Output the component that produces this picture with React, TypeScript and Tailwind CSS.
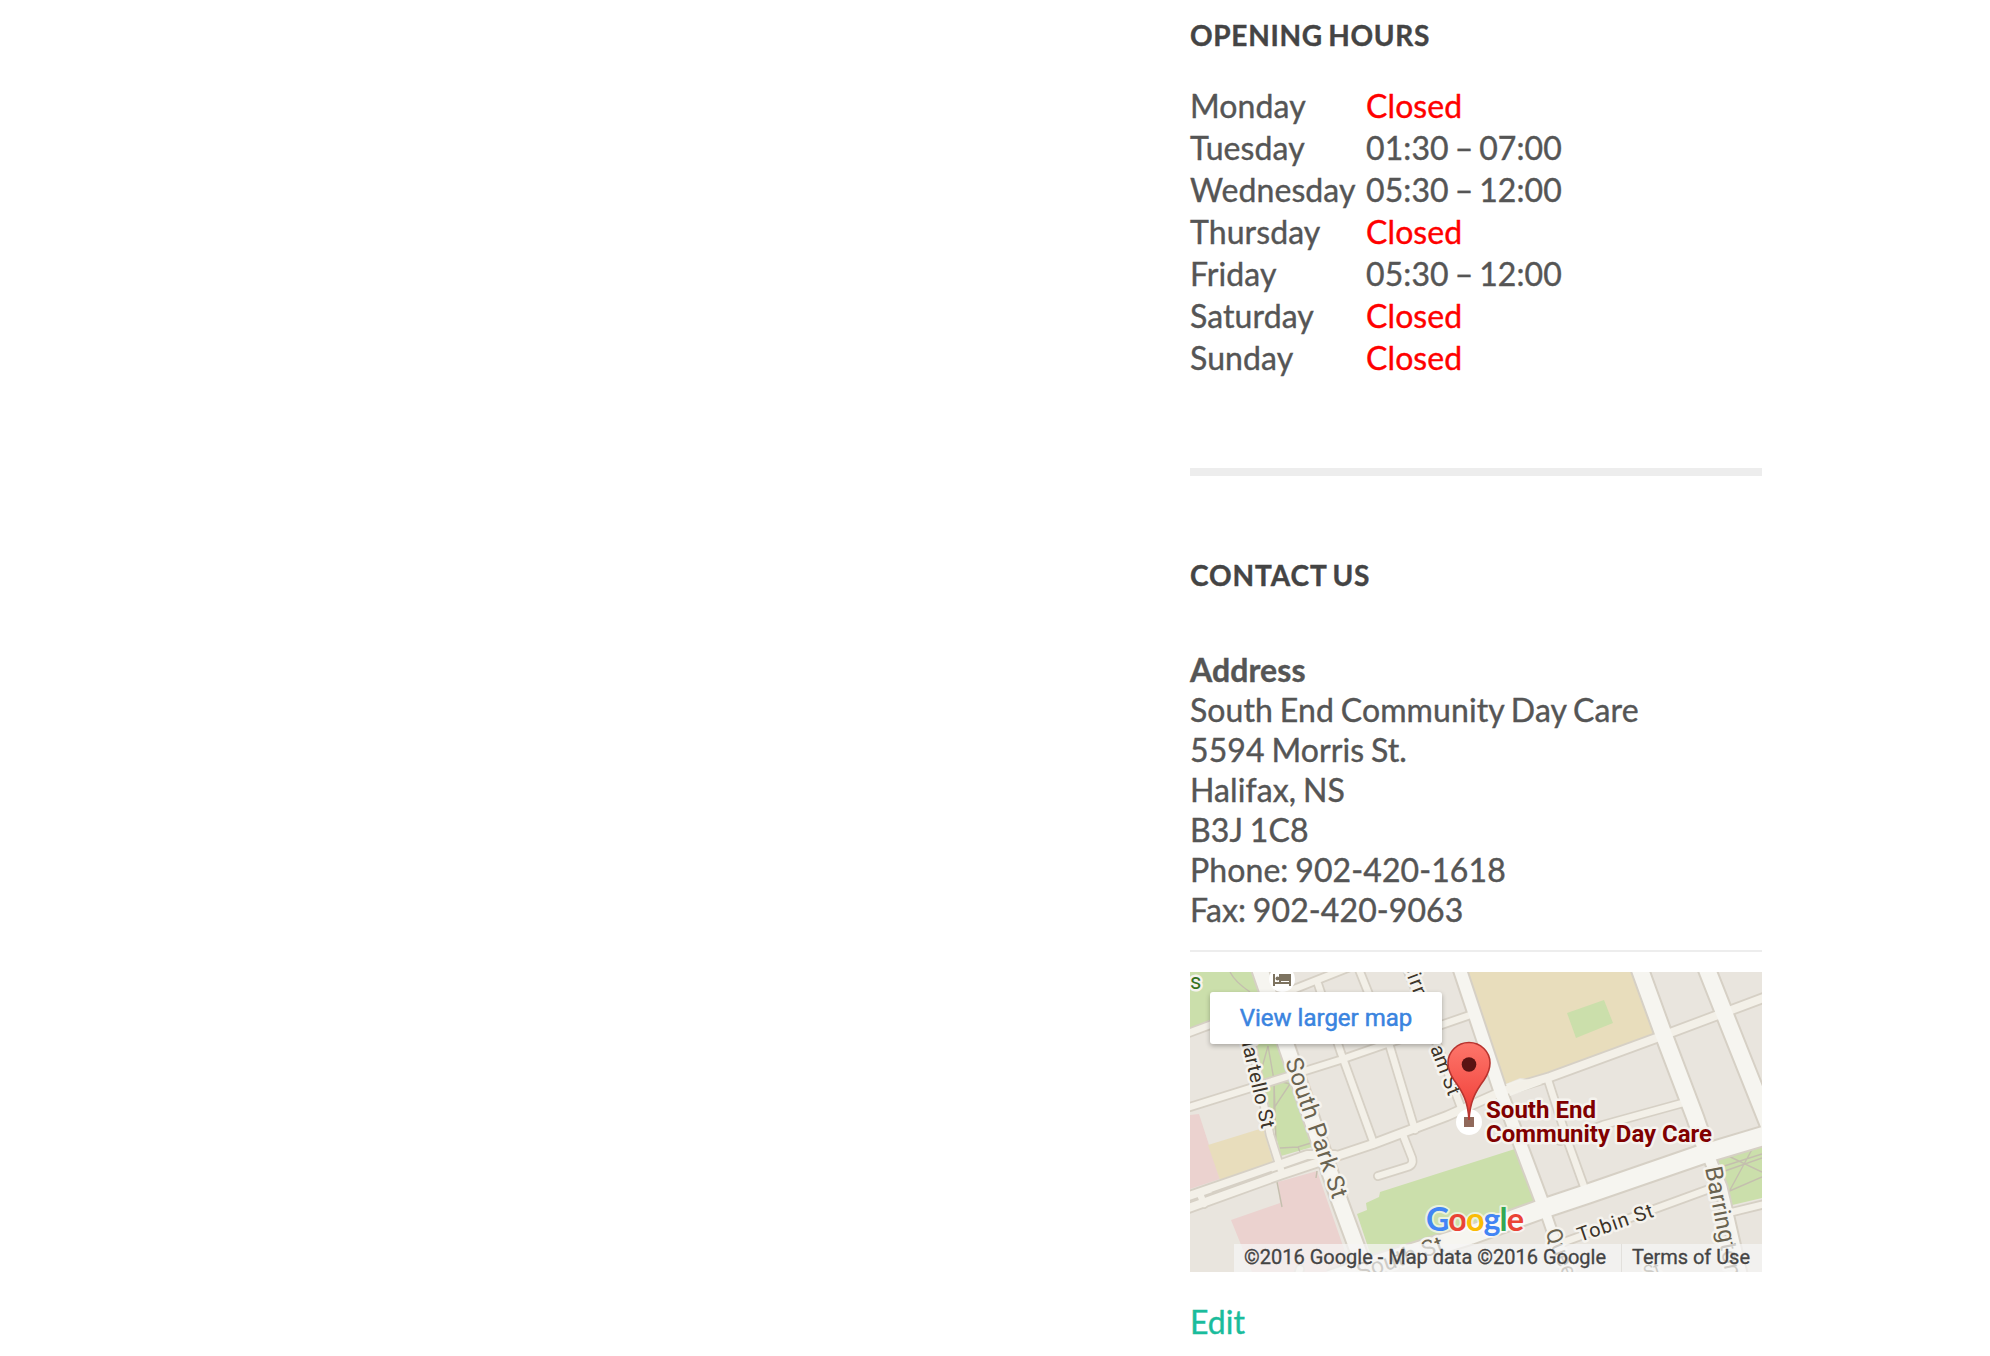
const hours: [string, string][] = [
  ['Monday', 'Closed'],
  ['Tuesday', '01:30 – 07:00'],
  ['Wednesday', '05:30 – 12:00'],
  ['Thursday', 'Closed'],
  ['Friday', '05:30 – 12:00'],
  ['Saturday', 'Closed'],
  ['Sunday', 'Closed'],
];

const address = [
  'South End Community Day Care',
  '5594 Morris St.',
  'Halifax, NS',
  'B3J 1C8',
  'Phone: 902-420-1618',
  'Fax: 902-420-9063',
];

const minorRoads = [
  'M0 135 L150 88 L283 42',
  'M-4 62 L20 53 L107 16 L160 -5',
  'M128 12 L151 81 L184 172',
  'M168 -5 L200 75 L225 158',
  'M217 -3 L250 80 L272 138',
  'M62 73 L80 163 L91 198',
  'M358 108 L378 170 L396 220',
  'M370 169 L413 153 L500 129',
  'M522 216 L440 246 L366 273',
  'M213 163 L222 186 Q224 193 217 195 L188 204',
  'M575 232 L530 243',
  'M10 222 L14 232',
  'M106 310 L110 297',
];

const midRoads = ['M-4 225 L60 203 L117 183 L145 183', 'M-4 237 L90 203 L183 172 L257 144 L313 119 L360 105 L480 61 L576 25'];

const majorRoads: [string, number][] = [
  ['M69 -5 L110 113 L150 230 L178 306', 15],
  ['M269 -5 L310 118 L352 230', 12],
  ['M352 230 L378 306', 9],
  ['M449 -5 L473 61 L505 145 L517 180', 16],
  ['M517 180 L531 215 L552 306', 11],
  ['M516 -5 L535 43 L580 156', 16],
  ['M140 308 L190 291 L280 263 L352 237 L397 222 L513 182 L580 162', 18],
];

function MapDrawing() {
  return (
    <svg width="572" height="300" viewBox="0 0 572 300" className="block" fontFamily="Roboto, sans-serif">
      <rect width="572" height="300" fill="#e9e5de" />
      <g fill="#cbdfab">
        <path d="M0 0 H62 L100 90 L129 173 L91 184 L60 60 L20 48 L0 57Z" />
        <path d="M328 176 L190 220 L189 225 L176 231 L177 238 L167 242 L184 293 L280 263 L352 237Z" />
        <path d="M525 181 L572 168 V226 L538 234Z" />
      </g>
      <g fill="#ebd2cf">
        <path d="M0 143 L9 142 L30 207 L0 217Z" />
        <path d="M88 210 L127 199 L162 300 H62 L41 248 L90 231Z" />
      </g>
      <g fill="#e8ddbc">
        <path d="M18 173 L73 156 L83 190 L30 208Z" />
        <path d="M276 0 H443 L464 62 L345 107 L330 106 L316 112Z" />
      </g>
      <path d="M377 41 L414 28 L423 51 L386 66Z" fill="#cbdfab" />
      <g fill="none" stroke="#c4bfae" strokeWidth="1.4">
        <path d="M40 0 Q45 10 60 20 M68 110 L78 74 L84 108 L100 112 L84 136 L84 108 L68 110 M84 108 L86 170 M90 176 L108 175 L121 171 M108 175 L110 180" />
        <path d="M530 180 L572 200 M528 196 L572 182 M566 170 L540 218 M535 221 L572 205 M532 200 L572 186" />
        <path d="M87 210 L92 235 M127 199 L126 206" />
      </g>
      <g fill="none" stroke="#d6d0c5" strokeLinecap="round" strokeLinejoin="round">
        {minorRoads.map((d) => <path key={d} d={d} strokeWidth="10" />)}
        {midRoads.map((d) => <path key={d} d={d} strokeWidth="11.5" />)}
        {majorRoads.map(([d, w]) => <path key={d} d={d} strokeWidth={w + 4} strokeLinecap="butt" />)}
      </g>
      <path d="M316 112 L330 107 L345 108 L352 112 L320 124Z" fill="#f3f1ea" />
      <g fill="none" stroke="#f3f0e8" strokeLinecap="round" strokeLinejoin="round">
        {minorRoads.map((d) => <path key={d} d={d} strokeWidth="6.5" />)}
        {midRoads.map((d) => <path key={d} d={d} strokeWidth="8" />)}
        {majorRoads.map(([d, w]) => <path key={d} d={d} strokeWidth={w} stroke="#f6f5f0" />)}
      </g>
      <path d="M22 221 L82 200" stroke="#d6d0c5" strokeWidth="2.5" fill="none" />

      <g stroke="#f5f3ee" strokeWidth="5" strokeLinejoin="round" paintOrder="stroke" fontSize="20">
        <text x="0" y="17" fill="#35721f" fontSize="22">s</text>
        <g fill="#3c3429">
          <text transform="translate(49 59) rotate(77)" textLength="101">Martello St</text>
          <text transform="translate(212 -9) rotate(69)" textLength="52">Birmi</text>
          <text transform="translate(240 76) rotate(69)" textLength="52">am St</text>
          <text transform="translate(390 270) rotate(-19)" textLength="79">Tobin St</text>
        </g>
        <g fill="#6a6350" fontSize="24">
          <text transform="translate(95 89) rotate(71)" textLength="147">South Park St</text>
          <text transform="translate(170 308) rotate(-19)" textLength="90" fontSize="23">South St</text>
          <text transform="translate(515 196) rotate(79)" textLength="112">Barrington</text>
          <text transform="translate(355 260) rotate(68)" fontSize="22">Queen</text>
          <text transform="translate(456 307) rotate(-19)" fontSize="18">St</text>
        </g>
      </g>

      <circle cx="92" cy="7" r="13" fill="#fff" />
      <path d="M84 2 V14 M84 11 H100 M100 14 V3 H90 V10" stroke="#7d7360" strokeWidth="2" fill="none" />
      <rect x="91" y="4" width="9" height="5" fill="#7d7360" />
      <circle cx="87.500" cy="6.500" r="2" fill="#7d7360" />

      <circle cx="279" cy="150" r="13" fill="#fff" />
      <rect x="274" y="145" width="10" height="10" fill="#90695b" />
      <linearGradient id="pin" x1="0" y1="0" x2="0" y2="1">
        <stop offset="0" stopColor="#fd766b" />
        <stop offset="0.6" stopColor="#f5524a" />
        <stop offset="1" stopColor="#e9352f" />
      </linearGradient>
      <path
        d="M279 148 C278 130 273 120 264 108 C260 102 258 97 258 91 A21 20.5 0 0 1 300 91 C300 97 298 102 294 108 C285 120 280 130 279 148Z"
        fill="url(#pin)"
        stroke="#b8342f"
        strokeWidth="1.6"
      />
      <circle cx="279" cy="92.5" r="7.3" fill="#5a1313" />

      <g fill="#800000" stroke="#f5f3ee" strokeWidth="5" strokeLinejoin="round" paintOrder="stroke" fontSize="24" fontWeight="700">
        <text x="296" y="146" textLength="110" lengthAdjust="spacingAndGlyphs">South End</text>
        <text x="296" y="170" textLength="226" lengthAdjust="spacingAndGlyphs">Community Day Care</text>
      </g>

      <text
        x="236"
        y="258.500"
        fontFamily="Lato, sans-serif"
        fontSize="32.500"
        fontWeight="700"
        textLength="98"
        stroke="#fff"
        strokeOpacity="0.6"
        strokeWidth="4"
        strokeLinejoin="round"
        paintOrder="stroke"
      >
        <tspan fill="#4285f4">G</tspan>
        <tspan fill="#ea4335">o</tspan>
        <tspan fill="#fbbc05">o</tspan>
        <tspan fill="#4285f4">g</tspan>
        <tspan fill="#34a853">l</tspan>
        <tspan fill="#ea4335">e</tspan>
      </text>

      <rect x="44" y="272" width="528" height="28" fill="#f5f5f5" fillOpacity="0.72" />
      <path d="M431.500 272 V300" stroke="#e2e0dc" />
      <g fill="#444" stroke="#444" strokeWidth="0.3" fontSize="20">
        <text x="54" y="292" textLength="362">©2016 Google - Map data ©2016 Google</text>
        <text x="442" y="292" textLength="118">Terms of Use</text>
      </g>
    </svg>
  );
}

export default function App() {
  return (
    <div className="min-h-[1356px] bg-white pl-[1190px] font-['Lato',sans-serif] text-[32px] text-[#555] [-webkit-text-stroke:0.4px_currentColor]">
      <aside className="w-[572px] pt-[17px]">
        <h2 className="text-[28px] leading-9 font-bold tracking-[0.7px] whitespace-nowrap text-[#444] [word-spacing:-2px]">OPENING HOURS</h2>
        <dl className="mt-8 grid grid-cols-[176px_1fr] leading-[42px] tracking-[0.1px] whitespace-nowrap [word-spacing:-2.4px]">
          {hours.map(([day, time]) => (
            <div key={day} className="contents">
              <dt>{day}</dt>
              <dd className={time === 'Closed' ? 'text-[#f00]' : ''}>{time}</dd>
            </div>
          ))}
        </dl>
        <div className="mt-[89px] h-2 bg-[#ededed]" />
        <h2 className="mt-[81px] text-[28px] leading-9 font-bold tracking-[0.9px] whitespace-nowrap text-[#444] [word-spacing:-2px]">CONTACT US</h2>
        <address className="mt-[57px] leading-10 tracking-[0.1px] whitespace-nowrap not-italic [word-spacing:-1.5px]">
          <strong className="block font-bold">Address</strong>
          {address.map((line) => (
            <div key={line}>{line}</div>
          ))}
        </address>
        <div className="mt-5 h-0.5 bg-[#ededed]" />
        <div className="relative mt-5 h-[300px] overflow-hidden [-webkit-text-stroke:0]">
          <MapDrawing />
          <a className="absolute top-5 left-5 flex h-[52px] w-[232px] items-center justify-center rounded-[3px] bg-white font-['Roboto',sans-serif] text-2xl whitespace-nowrap text-[#3a84df] shadow-[0_2px_5px_rgba(0,0,0,0.28)] [-webkit-text-stroke:0.5px_currentColor]">
            View larger map
          </a>
        </div>
        <a className="mt-[30px] block leading-10 text-[#1abc9c]">Edit</a>
      </aside>
    </div>
  );
}
